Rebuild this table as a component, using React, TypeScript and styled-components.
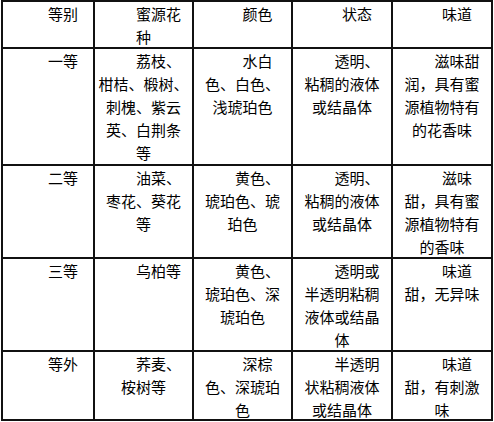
import React from "react";
import styled, { createGlobalStyle } from "styled-components";

type Row = {
  height: number;
  cells: string[][];
};

const GlobalStyle = createGlobalStyle`
  html, body {
    margin: 0;
    padding: 0;
    background: #fff;
  }
`;

const Page = styled.div`
  padding-left: 1px;
  font-family: "Noto Sans CJK SC", "Noto Sans", sans-serif;
  font-size: 15px;
  color: #000;
`;

const Grid = styled.div<{ $rows: string }>`
  display: inline-grid;
  grid-template-columns: 90px 97px 97px 98px 98px;
  grid-template-rows: ${(p) => p.$rows};
  gap: 2px;
  padding: 2px;
  background: #111;
`;

const Cell = styled.div`
  background: #fff;
  text-align: center;
  text-indent: 2em;
  line-height: 23px;
  white-space: nowrap;
  overflow: visible;
`;

const rows: Row[] = [
  {
    height: 45,
    cells: [["等别"], ["蜜源花", "种"], ["颜色"], ["状态"], ["味道"]],
  },
  {
    height: 115,
    cells: [
      ["一等"],
      ["荔枝、", "柑桔、椴树、", "刺槐、紫云", "英、白荆条", "等"],
      ["水白", "色、白色、", "浅琥珀色"],
      ["透明、", "粘稠的液体", "或结晶体"],
      ["滋味甜", "润，具有蜜", "源植物特有", "的花香味"],
    ],
  },
  {
    height: 91,
    cells: [
      ["二等"],
      ["油菜、", "枣花、葵花", "等"],
      ["黄色、", "琥珀色、琥", "珀色"],
      ["透明、", "粘稠的液体", "或结晶体"],
      ["滋味", "甜，具有蜜", "源植物特有", "的香味"],
    ],
  },
  {
    height: 91,
    cells: [
      ["三等"],
      ["乌柏等"],
      ["黄色、", "琥珀色、深", "琥珀色"],
      ["透明或", "半透明粘稠", "液体或结晶", "体"],
      ["味道", "甜，无异味"],
    ],
  },
  {
    height: 67,
    cells: [
      ["等外"],
      ["荞麦、", "桉树等"],
      ["深棕", "色、深琥珀", "色"],
      ["半透明", "状粘稠液体", "或结晶体"],
      ["味道", "甜，有刺激", "味"],
    ],
  },
];

const App = () => {
  return (
    <>
      <GlobalStyle />
      <Page>
        <Grid $rows={rows.map((r) => `${r.height}px`).join(" ")}>
          {rows.map((r, i) =>
            r.cells.map((lines, j) => (
              <Cell key={`${i}-${j}`}>
                {lines.map((l, k) => (
                  <React.Fragment key={k}>
                    {k > 0 && <br />}
                    {l}
                  </React.Fragment>
                ))}
              </Cell>
            ))
          )}
        </Grid>
      </Page>
    </>
  );
};

export default App;
